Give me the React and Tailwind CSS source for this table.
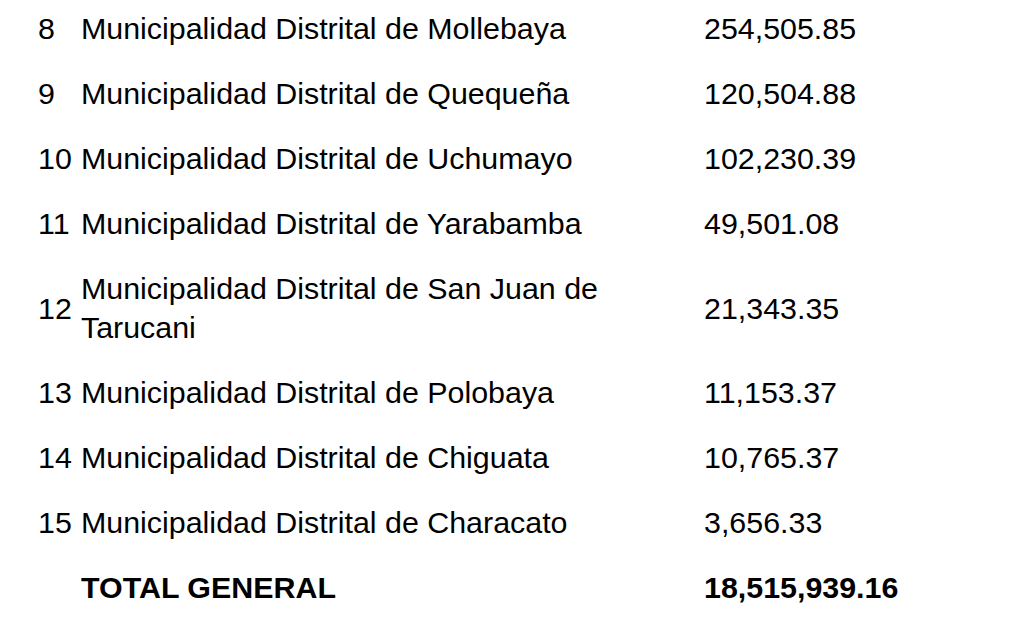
const rows = [
  { n: '8', name: 'Municipalidad Distrital de Mollebaya', amount: '254,505.85' },
  { n: '9', name: 'Municipalidad Distrital de Quequeña', amount: '120,504.88' },
  { n: '10', name: 'Municipalidad Distrital de Uchumayo', amount: '102,230.39' },
  { n: '11', name: 'Municipalidad Distrital de Yarabamba', amount: '49,501.08' },
  { n: '12', name: 'Municipalidad Distrital de San Juan de Tarucani', amount: '21,343.35' },
  { n: '13', name: 'Municipalidad Distrital de Polobaya', amount: '11,153.37' },
  { n: '14', name: 'Municipalidad Distrital de Chiguata', amount: '10,765.37' },
  { n: '15', name: 'Municipalidad Distrital de Characato', amount: '3,656.33' },
];

export default function App() {
  return (
    <div
      className="w-[1024px] h-[638px] overflow-hidden bg-white text-black"
      style={{ fontFamily: '"Liberation Sans", Arial, sans-serif' }}
    >
      <div className="-mt-[4px] pl-[38px] grid grid-cols-[43px_623px_1fr] text-[30.4px] leading-[39px]">
        {rows.map((r) => (
          <div key={r.n} className="contents">
            <div className="py-[13px] flex items-center">{r.n}</div>
            <div className="py-[13px] pr-2">{r.name}</div>
            <div className="py-[13px] flex items-center">{r.amount}</div>
          </div>
        ))}
        <div className="py-[13px]"></div>
        <div className="py-[13px] font-bold">TOTAL GENERAL</div>
        <div className="py-[13px] font-bold">18,515,939.16</div>
      </div>
    </div>
  );
}
